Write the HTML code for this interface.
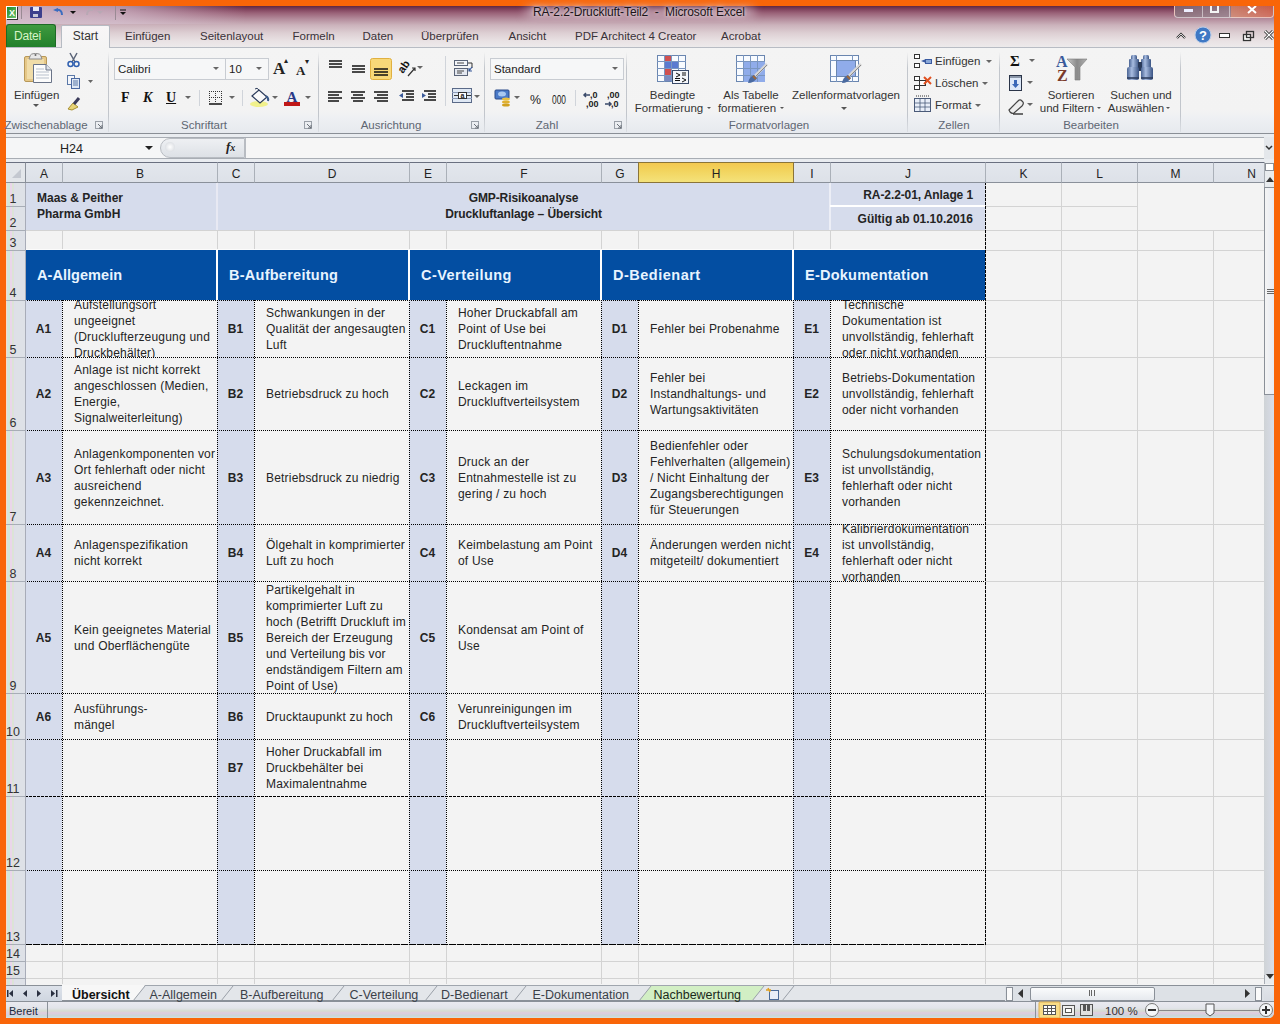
<!DOCTYPE html><html><head><meta charset="utf-8"><style>
*{box-sizing:border-box}
body{margin:0;width:1280px;height:1024px;overflow:hidden;position:relative;background:#f96508;font-family:"Liberation Sans",sans-serif}
.a{position:absolute}
.ch{position:absolute;top:162px;height:21px;font-size:12px;color:#222;text-align:center;line-height:19px;padding-top:2px;background:linear-gradient(#e3e7ed,#dde1e8);border-top:1px solid #6a7080;border-right:1px solid #aab0b8;border-bottom:1px solid #8a909a}
.rh{position:absolute;left:6px;width:20px;font-size:12.5px;color:#333;background:linear-gradient(90deg,#f6dccc 0,#f6dccc 1px,#d2e6dc 1px,#d2e6dc 4px,#eAd6ea 4px,#ead6ea 6px,#dce4d6 6px,#dce4d6 8px,#e0dcec 8px,#e0dcec 9px,#dee1e7 9px);border-bottom:1px solid #a8adb6;border-right:1px solid #a8acb8;padding-right:5px;display:flex;align-items:flex-end;justify-content:center;line-height:14px;overflow:hidden}
.c{position:absolute;display:flex;align-items:center;overflow:hidden;font-size:12px;color:#242424;line-height:16px;white-space:nowrap;letter-spacing:0.2px}
.c.b{letter-spacing:0}
.b{font-weight:bold}
.lav{background:#d6dcec}
.blu{background:#0b4d9e}
</style></head><body>
<div class="a" style="left:6px;top:6px;width:1268px;height:1012px;background:#f3f3f3;border-radius:0 0 6px 0"></div>
<div class="a" style="left:6px;top:6px;width:1268px;height:41px;background:linear-gradient(#62283f 0px,#7e405a 3px,#9a6278 7px,#b48c9c 13px,#cbb2bb 19px,#ddcfd3 27px,#e9e2e4 35px,#edeaeb 41px)"></div><div class="a" style="left:6px;top:6px;width:240px;height:18px;background:linear-gradient(90deg,rgba(215,195,210,.85) 0,rgba(215,195,210,.7) 110px,rgba(215,195,210,0) 240px)"></div><div class="a" style="left:6px;top:6px;width:11px;height:13px;background:linear-gradient(135deg,#1e8a2e,#6fc36f);border:1px solid #fff;box-shadow:1px 1px 0 #333"></div><div class="a" style="left:9px;top:8px;font:bold 9px 'Liberation Sans',sans-serif;color:#fff">X</div><div class="a" style="left:21px;top:6px;width:1px;height:13px;background:#9a8a94"></div><div class="a" style="left:30px;top:7px;width:12px;height:11px;background:#3c3f8c;border-radius:1px"></div><div class="a" style="left:33px;top:7px;width:6px;height:4px;background:#e8e8f4"></div><div class="a" style="left:33px;top:14px;width:5px;height:3px;background:#c8c8d8"></div><svg class="a" style="left:50px;top:6px" width="80" height="14"><path d="M3 4 L8 2 L8 6 Z" fill="#3a6cc0"/><path d="M6 4 Q12 3 12 9" stroke="#3a6cc0" stroke-width="2" fill="none"/><path d="M20 5 L26 5 L23 8 Z" fill="#111"/><path d="M37 9 Q37 3 43 4" stroke="#b8a8b4" stroke-width="2" fill="none"/><path d="M47 5 L53 5 L50 8 Z" fill="#b8a8b4"/><line x1="65.5" y1="0" x2="65.5" y2="14" stroke="#9a8a94"/><path d="M70 4 L76 4" stroke="#111"/><path d="M70 6 L76 6 L73 9 Z" fill="#111"/></svg><div class="a" style="left:524px;top:6px;width:232px;height:13px;border-radius:7px;background:rgba(215,195,205,.5);filter:blur(4px)"></div><div class="a" style="left:533px;top:5px;font-size:12px;color:#1c1418;white-space:nowrap;text-shadow:0 0 6px #e8dde2,0 0 3px #e8dde2;letter-spacing:-0.1px">RA-2.2-Druckluft-Teil2&nbsp; - &nbsp;Microsoft Excel</div><div class="a" style="left:1174px;top:6px;width:100px;height:12px;border:1px solid rgba(255,255,255,.6);border-top:none;border-radius:0 0 4px 4px;background:linear-gradient(rgba(0,0,0,0),rgba(255,255,255,.15)),linear-gradient(90deg,#80606e 0,#8e7280 56px,#c77a66 56px,#c85a48 100px)"></div><div class="a" style="left:1202px;top:6px;width:1px;height:11px;background:rgba(255,255,255,.5)"></div><div class="a" style="left:1229px;top:6px;width:1px;height:11px;background:rgba(255,255,255,.5)"></div><div class="a" style="left:1184px;top:9px;width:9px;height:3px;background:#eef"></div><div class="a" style="left:1210px;top:6px;width:9px;height:7px;border:2px solid #f4f4f4;border-top:none"></div><svg class="a" style="left:1247px;top:6px" width="12" height="8"><path d="M1 0 L9 7 M9 0 L1 7" stroke="#fff" stroke-width="2"/></svg><svg class="a" style="left:1174px;top:25px" width="100" height="22"><path d="M3 13 L7 9 L11 13" stroke="#333" stroke-width="2.2" fill="none"/><path d="M3 13 L7 9 L11 13" stroke="#fff" stroke-width="0.8" fill="none"/><circle cx="29" cy="10" r="8" fill="#3f78c4" stroke="#b8cce8" stroke-width="1"/><text x="29" y="15" font-family="Liberation Sans" font-weight="bold" font-size="13" fill="#fff" text-anchor="middle">?</text><rect x="45.5" y="8.5" width="10" height="4" fill="#fff" stroke="#333"/><rect x="69.5" y="9.5" width="7" height="6" fill="#fff" stroke="#333" stroke-width="1.3"/><rect x="72.5" y="6.5" width="7" height="6" fill="none" stroke="#333" stroke-width="1.3"/><path d="M91 6 L99 14 M99 6 L91 14" stroke="#333" stroke-width="3"/><path d="M91 6 L99 14 M99 6 L91 14" stroke="#fff" stroke-width="1.2"/></svg><div class="a" style="left:6px;top:24px;width:50px;height:23px;background:linear-gradient(#3f9a3f,#21802b);border:1px solid #1d6a25;border-bottom:none;border-radius:3px 3px 0 0;color:#d8f4c8;font-size:12px;line-height:22px;padding-left:7px;letter-spacing:-0.2px">Datei</div><div class="a" style="left:125px;top:30px;font-size:11.5px;color:#3a3238;white-space:nowrap">Einfügen</div><div class="a" style="left:200px;top:30px;font-size:11.5px;color:#3a3238;white-space:nowrap">Seitenlayout</div><div class="a" style="left:292.5px;top:30px;font-size:11.5px;color:#3a3238;white-space:nowrap">Formeln</div><div class="a" style="left:362.5px;top:30px;font-size:11.5px;color:#3a3238;white-space:nowrap">Daten</div><div class="a" style="left:421px;top:30px;font-size:11.5px;color:#3a3238;white-space:nowrap">Überprüfen</div><div class="a" style="left:508.5px;top:30px;font-size:11.5px;color:#3a3238;white-space:nowrap">Ansicht</div><div class="a" style="left:575px;top:30px;font-size:11.5px;color:#3a3238;white-space:nowrap">PDF Architect 4 Creator</div><div class="a" style="left:721px;top:30px;font-size:11.5px;color:#3a3238;white-space:nowrap">Acrobat</div><div class="a" style="left:6px;top:47px;width:1268px;height:87px;background:linear-gradient(#f4f4f4 0,#f3f3f3 62px,#eef0f3 70px,#e6e9ee 86px);border-top:1px solid #b8bcc4;border-bottom:1px solid #8a8f96"></div><div class="a" style="left:61px;top:25px;width:49px;height:23px;background:linear-gradient(#f8f6f7,#f4f4f4);border:1px solid #b6bbc3;border-bottom:none;border-radius:2px 2px 0 0;color:#333;font-size:12px;line-height:21px;text-align:center">Start</div><div class="a" style="left:108px;top:52px;width:1px;height:80px;background:linear-gradient(rgba(190,195,202,0),#c2c6cc 20%,#c2c6cc 80%,rgba(190,195,202,.3))"></div><div class="a" style="left:318px;top:52px;width:1px;height:80px;background:linear-gradient(rgba(190,195,202,0),#c2c6cc 20%,#c2c6cc 80%,rgba(190,195,202,.3))"></div><div class="a" style="left:484px;top:52px;width:1px;height:80px;background:linear-gradient(rgba(190,195,202,0),#c2c6cc 20%,#c2c6cc 80%,rgba(190,195,202,.3))"></div><div class="a" style="left:626px;top:52px;width:1px;height:80px;background:linear-gradient(rgba(190,195,202,0),#c2c6cc 20%,#c2c6cc 80%,rgba(190,195,202,.3))"></div><div class="a" style="left:907px;top:52px;width:1px;height:80px;background:linear-gradient(rgba(190,195,202,0),#c2c6cc 20%,#c2c6cc 80%,rgba(190,195,202,.3))"></div><div class="a" style="left:999px;top:52px;width:1px;height:80px;background:linear-gradient(rgba(190,195,202,0),#c2c6cc 20%,#c2c6cc 80%,rgba(190,195,202,.3))"></div><div class="a" style="left:1180px;top:52px;width:1px;height:80px;background:linear-gradient(rgba(190,195,202,0),#c2c6cc 20%,#c2c6cc 80%,rgba(190,195,202,.3))"></div><div class="a" style="left:-14px;top:119px;width:120px;text-align:center;font-size:11.5px;color:#5e6672;white-space:nowrap">Zwischenablage</div><div class="a" style="left:144px;top:119px;width:120px;text-align:center;font-size:11.5px;color:#5e6672;white-space:nowrap">Schriftart</div><div class="a" style="left:331px;top:119px;width:120px;text-align:center;font-size:11.5px;color:#5e6672;white-space:nowrap">Ausrichtung</div><div class="a" style="left:487px;top:119px;width:120px;text-align:center;font-size:11.5px;color:#5e6672;white-space:nowrap">Zahl</div><div class="a" style="left:709px;top:119px;width:120px;text-align:center;font-size:11.5px;color:#5e6672;white-space:nowrap">Formatvorlagen</div><div class="a" style="left:894px;top:119px;width:120px;text-align:center;font-size:11.5px;color:#5e6672;white-space:nowrap">Zellen</div><div class="a" style="left:1031px;top:119px;width:120px;text-align:center;font-size:11.5px;color:#5e6672;white-space:nowrap">Bearbeiten</div><svg class="a" style="left:95px;top:121px" width="9" height="9"><rect x="0.5" y="0.5" width="7" height="7" fill="none" stroke="#9aa0a8"/><path d="M3 3 L7 7 M7 4 L7 7 L4 7" stroke="#6a7078" fill="none"/></svg><svg class="a" style="left:304px;top:121px" width="9" height="9"><rect x="0.5" y="0.5" width="7" height="7" fill="none" stroke="#9aa0a8"/><path d="M3 3 L7 7 M7 4 L7 7 L4 7" stroke="#6a7078" fill="none"/></svg><svg class="a" style="left:471px;top:121px" width="9" height="9"><rect x="0.5" y="0.5" width="7" height="7" fill="none" stroke="#9aa0a8"/><path d="M3 3 L7 7 M7 4 L7 7 L4 7" stroke="#6a7078" fill="none"/></svg><svg class="a" style="left:614px;top:121px" width="9" height="9"><rect x="0.5" y="0.5" width="7" height="7" fill="none" stroke="#9aa0a8"/><path d="M3 3 L7 7 M7 4 L7 7 L4 7" stroke="#6a7078" fill="none"/></svg><svg class="a" style="left:22px;top:52px" width="32" height="34"><rect x="2.5" y="4.5" width="22" height="25" rx="1.5" fill="#e6c888" stroke="#b89858"/><rect x="5" y="7" width="17" height="20" fill="#f0dca8"/><path d="M8 4.5 Q8 1.5 13.5 1.5 Q19 1.5 19 4.5 L20 7 H7 Z" fill="#e8e8e8" stroke="#8a8a8a"/><circle cx="13.5" cy="3" r="1" fill="#666"/><path d="M11.5 12.5 H24 L29.5 18 V30.5 H11.5 Z" fill="#fcfcfc" stroke="#6a7488"/><path d="M24 12.5 V18 H29.5" fill="#e0e4ea" stroke="#6a7488"/><path d="M14 17 H22 M14 20 H27 M14 23 H27 M14 26 H27" stroke="#b8c0cc"/></svg><div class="a" style="left:14px;top:89px;font-size:11.5px;color:#333">Einfügen</div><svg class="a" style="left:33px;top:104px" width="8" height="5"><path d="M0 0 L6 0 L3 3 Z" fill="#555"/></svg><svg class="a" style="left:66px;top:52px" width="16" height="16"><path d="M4 1 L9 10 M11 1 L6 10" stroke="#5a6478" stroke-width="1.5"/><circle cx="4.5" cy="12" r="2.5" fill="none" stroke="#3060b0" stroke-width="1.5"/><circle cx="10.5" cy="12" r="2.5" fill="none" stroke="#3060b0" stroke-width="1.5"/></svg><svg class="a" style="left:66px;top:74px" width="30" height="16"><rect x="1.5" y="1.5" width="7" height="9" fill="#f4f6fa" stroke="#5a78a8"/><rect x="5.5" y="4.5" width="8" height="10" fill="#dfe8f4" stroke="#4a68a0"/><path d="M7 7 H12 M7 9 H12 M7 11 H12" stroke="#5a78a8"/><path d="M22 6 L27 6 L24.5 9 Z" fill="#666"/></svg><svg class="a" style="left:66px;top:95px" width="16" height="16"><path d="M2 14 L7 8 L12 12 L6 15 Z" fill="#e8d478" stroke="#a89030"/><path d="M8 9 L13 3" stroke="#3a3a5a" stroke-width="3"/></svg><div class="a" style="left:114px;top:58px;width:112px;height:22px;background:#f6f7f8;border:1px solid #c8ccd2;font-size:11.5px;line-height:20px;padding-left:3px;color:#222">Calibri</div><div class="a" style="left:225px;top:58px;width:44px;height:22px;background:#f6f7f8;border:1px solid #c8ccd2;font-size:11.5px;line-height:20px;padding-left:3px;color:#222">10</div><svg class="a" style="left:213px;top:66px" width="70" height="8"><path d="M0 1 L6 1 L3 4 Z" fill="#666"/><path d="M43 1 L49 1 L46 4 Z" fill="#666"/></svg><div class="a" style="left:273px;top:59px;font:bold 17px 'Liberation Serif',serif;color:#222">A</div><div class="a" style="left:284px;top:56px;font-size:8px;color:#222">▴</div><div class="a" style="left:296px;top:63px;font:bold 13px 'Liberation Serif',serif;color:#222">A</div><div class="a" style="left:305px;top:57px;font-size:8px;color:#222">▾</div><div class="a" style="left:121px;top:90px;font:bold 14px 'Liberation Serif',serif;color:#111">F</div><div class="a" style="left:143px;top:90px;font:bold italic 14px 'Liberation Serif',serif;color:#111">K</div><div class="a" style="left:166px;top:90px;font:bold 14px 'Liberation Serif',serif;color:#111;text-decoration:underline">U</div><svg class="a" style="left:180px;top:86px" width="140" height="24"><path d="M5 10 L11 10 L8 13 Z" fill="#666"/><line x1="19.5" y1="4" x2="19.5" y2="20" stroke="#d0d4da"/><path d="M29.5 5 V17 M35.5 5 V17 M41.5 5 V17 M29 5.5 H42 M29 11.5 H42" stroke="#333" stroke-dasharray="1 1"/><line x1="29" y1="18" x2="42" y2="18" stroke="#111" stroke-width="1.5"/><path d="M49 10 L55 10 L52 13 Z" fill="#666"/><line x1="62.5" y1="4" x2="62.5" y2="20" stroke="#d0d4da"/><ellipse cx="79" cy="18" rx="9" ry="3" fill="#f0f060" opacity=".7"/><path d="M72 10 L79 4 L87 11 L80 17 Z" fill="#fafafa" stroke="#2a3a5a" stroke-width="1.2"/><path d="M79 4 Q77 1 75 3" stroke="#2a3a5a" fill="none"/><path d="M86 10 Q89 12 88 15" stroke="#3a5a8a" stroke-width="2" fill="none"/><path d="M92 10 L98 10 L95 13 Z" fill="#666"/><text x="112" y="16" font-family="Liberation Serif" font-weight="bold" font-size="15" fill="#2a3a88" text-anchor="middle">A</text><rect x="104" y="16" width="16" height="4" fill="#c01818"/><path d="M125 10 L131 10 L128 13 Z" fill="#666"/></svg><svg class="a" style="left:322px;top:56px" width="160" height="52"><path d="M7 5 H20 M7 8 H20 M7 11 H20" stroke="#111" stroke-width="1.5"/><path d="M30 10 H43 M30 13 H43 M30 16 H43" stroke="#111" stroke-width="1.5"/><rect x="48.5" y="2.5" width="21" height="21" rx="2" fill="#f8d878" stroke="#e0b040"/><path d="M52 13 H66 M52 16 H66 M52 19 H66" stroke="#111" stroke-width="1.5"/><text x="0" y="0" font-family="Liberation Sans" font-weight="bold" font-size="11" fill="#111" transform="translate(81 18) rotate(-55)">ab</text><path d="M86 20 L93 12 M90 12 H93 V15" stroke="#333" stroke-width="1.2" fill="none"/><path d="M95 10 L101 10 L98 13 Z" fill="#666"/><line x1="123.5" y1="0" x2="123.5" y2="50" stroke="#d0d4da"/><rect x="132.5" y="4.5" width="13" height="5" fill="#f4f6fa" stroke="#5a6478"/><rect x="132.5" y="12.5" width="13" height="7" fill="#e4e8f0" stroke="#5a6478"/><path d="M135 7 H142 M135 15 H142 M135 17 H140" stroke="#444"/><path d="M146 7 H150 V12" stroke="#333" fill="none"/><path d="M150 11 L147 15 M147 12 V15 H150" stroke="#3a5a9a" stroke-width="1.2" fill="none"/><path d="M6 36 H20 M6 39 H17 M6 42 H20 M6 45 H17" stroke="#111" stroke-width="1.6"/><path d="M29 36 H43 M31 39 H41 M29 42 H43 M31 45 H41" stroke="#111" stroke-width="1.6"/><path d="M52 36 H66 M55 39 H66 M52 42 H66 M55 45 H66" stroke="#111" stroke-width="1.6"/><path d="M80 35 H92 M84 38 H92 M84 41 H92 M80 44 H92" stroke="#111" stroke-width="1.5"/><path d="M77 39.5 L81 37 L81 42 Z" fill="#3a5a9a"/><path d="M102 35 H114 M106 38 H114 M106 41 H114 M102 44 H114" stroke="#111" stroke-width="1.5"/><path d="M104 39.5 L100 37 L100 42 Z" fill="#3a5a9a"/><rect x="130.5" y="32.5" width="19" height="14" fill="#dfe8f4" stroke="#5a6a88"/><path d="M130 36.5 H150 M130 42.5 H150" stroke="#8a9ab8"/><rect x="136.5" y="36.5" width="8" height="6" fill="#fff" stroke="#333"/><text x="140.5" y="42" font-family="Liberation Sans" font-size="7" font-weight="bold" fill="#222" text-anchor="middle">a</text><path d="M132 39.5 H136 M145 39.5 H149" stroke="#333"/><path d="M152 39 L158 39 L155 42 Z" fill="#666"/></svg><div class="a" style="left:490px;top:58px;width:134px;height:22px;background:#f6f7f8;border:1px solid #c8ccd2;font-size:11.5px;line-height:20px;padding-left:3px;color:#222">Standard</div><svg class="a" style="left:612px;top:66px" width="8" height="6"><path d="M0 1 L6 1 L3 4 Z" fill="#666"/></svg><svg class="a" style="left:492px;top:86px" width="134" height="24"><rect x="3" y="4" width="14" height="9" rx="1" fill="#4a7ac8" stroke="#2a4a88"/><ellipse cx="10" cy="8" rx="4" ry="2.5" fill="#a8c8f0"/><ellipse cx="14" cy="16" rx="4" ry="1.5" fill="#e0b030"/><ellipse cx="14" cy="13" rx="4" ry="1.5" fill="#e8c040"/><ellipse cx="14" cy="19" rx="4" ry="1.5" fill="#d0a020"/><path d="M22 10 L28 10 L25 13 Z" fill="#666"/><text x="38" y="18" font-family="Liberation Sans" font-size="13" fill="#222" textLength="11" lengthAdjust="spacingAndGlyphs">%</text><text x="60" y="18" font-family="Liberation Sans" font-size="12" fill="#222" textLength="14" lengthAdjust="spacingAndGlyphs">000</text><line x1="83.5" y1="4" x2="83.5" y2="20" stroke="#d0d4da"/><path d="M92 9 H98 M94 7 L92 9 L94 11" stroke="#3a4a6a" stroke-width="1.5" fill="none"/><text x="98" y="12" font-family="Liberation Sans" font-weight="bold" font-size="9" fill="#222">,0</text><text x="94" y="21" font-family="Liberation Sans" font-weight="bold" font-size="9" fill="#222">,00</text><text x="115" y="12" font-family="Liberation Sans" font-weight="bold" font-size="9" fill="#222">,00</text><path d="M113 18 H119 M117 16 L119 18 L117 20" stroke="#3a4a6a" stroke-width="1.5" fill="none"/><text x="119" y="21" font-family="Liberation Sans" font-weight="bold" font-size="9" fill="#222">,0</text></svg><svg class="a" style="left:657px;top:55px" width="34" height="30"><rect x="0.5" y="0.5" width="28" height="26" fill="#f8fbff" stroke="#6a86b0"/><rect x="8" y="1" width="6" height="5" fill="#d05050"/><rect x="8" y="7" width="13" height="6" fill="#5a7ad0"/><rect x="8" y="14" width="6" height="6" fill="#d05050"/><rect x="8" y="21" width="6" height="5" fill="#7a8ac0"/><path d="M7.5 0 V27 M14.5 0 V27 M21.5 0 V27 M0 6.5 H29 M0 13.5 H29 M0 20.5 H29" stroke="#7a96c0"/><rect x="15.5" y="15.5" width="16" height="13" fill="#f4f6fa" stroke="#3a4a68"/><path d="M19 18 L23 20 L19 22 M18 23.5 H23 M18 25.5 H23 M25 18 H29 M25 20 H29 M25 23 L29 25 L25 27" stroke="#111" fill="none" stroke-width="1"/></svg><svg class="a" style="left:736px;top:55px" width="34" height="30"><rect x="0.5" y="0.5" width="28" height="26" fill="#f8fbff" stroke="#6a86b0"/><rect x="8" y="7" width="21" height="20" fill="#90acea"/><path d="M7.5 0 V27 M14.5 0 V27 M21.5 0 V27 M0 6.5 H29 M0 13.5 H29 M0 20.5 H29" stroke="#7a96c0"/><path d="M19 21 L31 9" stroke="#d8d8d8" stroke-width="3"/><path d="M20 21 L31 10" stroke="#8a8a8a" stroke-width="1"/><path d="M12 28 Q13 22 18 20 L21 23 Q18 28 12 28 Z" fill="#4a6aa0"/><path d="M17 21 L20 24" stroke="#a06a3a" stroke-width="2"/></svg><svg class="a" style="left:830px;top:55px" width="34" height="30"><rect x="0.5" y="0.5" width="28" height="26" fill="#f8fbff" stroke="#6a86b0"/><path d="M6.5 0 V27 M22.5 0 V27 M0 5.5 H29 M0 21.5 H29" stroke="#7a96c0"/><rect x="6.5" y="5.5" width="19" height="16" fill="#90acea" stroke="#6a86b0"/><path d="M19 21 L31 9" stroke="#d8d8d8" stroke-width="3"/><path d="M20 21 L31 10" stroke="#8a8a8a" stroke-width="1"/><path d="M12 28 Q13 22 18 20 L21 23 Q18 28 12 28 Z" fill="#4a6aa0"/><path d="M17 21 L20 24" stroke="#a06a3a" stroke-width="2"/></svg><div class="a" style="left:612.5px;top:89px;width:120px;text-align:center;font-size:11.5px;color:#333;white-space:nowrap">Bedingte</div><div class="a" style="left:609px;top:102px;width:120px;text-align:center;font-size:11.5px;color:#333;white-space:nowrap">Formatierung</div><div class="a" style="left:691px;top:89px;width:120px;text-align:center;font-size:11.5px;color:#333;white-space:nowrap">Als Tabelle</div><div class="a" style="left:687px;top:102px;width:120px;text-align:center;font-size:11.5px;color:#333;white-space:nowrap">formatieren</div><div class="a" style="left:786px;top:89px;width:120px;text-align:center;font-size:11.5px;color:#333;white-space:nowrap">Zellenformatvorlagen</div><svg class="a" style="left:700px;top:105px" width="160" height="10"><path d="M7 2 L11 2 L9 4 Z" fill="#555"/><path d="M80 2 L84 2 L82 4 Z" fill="#555"/><path d="M141 2 L147 2 L144 5 Z" fill="#555"/></svg><svg class="a" style="left:912px;top:53px" width="90" height="62"><rect x="2.5" y="1.5" width="5" height="4" fill="#fff" stroke="#333"/><rect x="2.5" y="10.5" width="5" height="4" fill="#fff" stroke="#333"/><path d="M9 8 L14 6 V10 Z" fill="#3a5aa0"/><rect x="13.5" y="6.5" width="6" height="4" fill="#8aa8d8" stroke="#3a5aa0"/><rect x="2.5" y="23.5" width="5" height="4" fill="#fff" stroke="#333"/><rect x="2.5" y="32.5" width="5" height="4" fill="#fff" stroke="#333"/><rect x="7.5" y="27.5" width="6" height="5" fill="#fff" stroke="#333"/><path d="M12 24 L19 31 M19 24 L12 31" stroke="#e05020" stroke-width="2"/><rect x="2.5" y="45.5" width="16" height="13" fill="#e8eef8" stroke="#4a5a78"/><path d="M2 50 H19 M2 54 H19 M8 45 V59 M13 45 V59" stroke="#4a5a78" stroke-width=".8"/><path d="M4 43 H17" stroke="#333" stroke-dasharray="1 1"/><path d="M74 7 L80 7 L77 10 Z" fill="#666"/><path d="M70 29 L76 29 L73 32 Z" fill="#666"/><path d="M63 51 L69 51 L66 54 Z" fill="#666"/></svg><div class="a" style="left:935px;top:55px;font-size:11.5px;color:#333;white-space:nowrap">Einfügen</div><div class="a" style="left:935px;top:77px;font-size:11.5px;color:#333;white-space:nowrap">Löschen</div><div class="a" style="left:935px;top:99px;font-size:11.5px;color:#333;white-space:nowrap">Format</div><div class="a" style="left:1010px;top:53px;font:bold 15px 'Liberation Serif',serif;color:#111">Σ</div><svg class="a" style="left:1007px;top:53px" width="30" height="64"><path d="M22 6 L28 6 L25 9 Z" fill="#666"/><rect x="2.5" y="22.5" width="12" height="15" fill="#dde8f8" stroke="#2a3448"/><rect x="3" y="23" width="11" height="2" fill="#8a96a8"/><path d="M7 27 H10 V31 H12 L8.5 35 L5 31 H7 Z" fill="#3a68b8"/><path d="M20 28 L26 28 L23 31 Z" fill="#666"/><path d="M2 57 L11 48 Q13 46 15 48 L16 49 Q17 51 15 53 L7 60 Q5 61 3 59 Z" fill="#ececec" stroke="#444" stroke-width="1.2"/><path d="M6 61 H16" stroke="#222" stroke-width="1.3"/><path d="M20 50 L26 50 L23 53 Z" fill="#666"/></svg><svg class="a" style="left:1055px;top:52px" width="34" height="32"><defs><linearGradient id="fg" x1="0" x2="1"><stop offset="0" stop-color="#c8c8c8"/><stop offset=".5" stop-color="#8a8a8a"/><stop offset="1" stop-color="#b0b0b0"/></linearGradient><linearGradient id="bg" x1="0" x2="1"><stop offset="0" stop-color="#4a6494"/><stop offset=".4" stop-color="#a8bce0"/><stop offset="1" stop-color="#3a5484"/></linearGradient></defs><text x="1" y="15" font-family="Liberation Serif" font-weight="bold" font-size="16" fill="#3a5a9a">A</text><text x="2" y="29" font-family="Liberation Serif" font-weight="bold" font-size="16" fill="#7a3a2a">Z</text><path d="M12 7 H32 L25 15 V28 H20 V15 Z" fill="url(#fg)" stroke="#7a7a7a" stroke-width=".6"/></svg><svg class="a" style="left:1126px;top:54px" width="30" height="28"><rect x="5" y="1" width="6" height="5" rx="1.5" fill="url(#bg)"/><rect x="17" y="1" width="6" height="5" rx="1.5" fill="url(#bg)"/><rect x="3" y="5" width="10" height="9" rx="1" fill="url(#bg)"/><rect x="15" y="5" width="10" height="9" rx="1" fill="url(#bg)"/><rect x="12" y="8" width="4" height="9" fill="#2a3a5a"/><rect x="1" y="13" width="12" height="13" rx="2" fill="url(#bg)"/><rect x="15" y="13" width="12" height="13" rx="2" fill="url(#bg)"/><path d="M1 24 H13 M15 24 H27" stroke="#2a3a5a" stroke-width="1.5"/></svg><div class="a" style="left:1011px;top:89px;width:120px;text-align:center;font-size:11.5px;color:#333;white-space:nowrap">Sortieren</div><div class="a" style="left:1007px;top:102px;width:120px;text-align:center;font-size:11.5px;color:#333;white-space:nowrap">und Filtern</div><div class="a" style="left:1081px;top:89px;width:120px;text-align:center;font-size:11.5px;color:#333;white-space:nowrap">Suchen und</div><div class="a" style="left:1076px;top:102px;width:120px;text-align:center;font-size:11.5px;color:#333;white-space:nowrap">Auswählen</div><svg class="a" style="left:1090px;top:105px" width="90" height="8"><path d="M7 2 L11 2 L9 4 Z" fill="#555"/><path d="M76 2 L80 2 L78 4 Z" fill="#555"/></svg><div class="a" style="left:6px;top:134px;width:1268px;height:28px;background:#e9ecf0"></div><div class="a" style="left:6px;top:137px;width:1258px;height:22px;background:#f5f6f7;border-top:1px solid #a8adb4;border-bottom:1px solid #a8adb4"></div><div class="a" style="left:60px;top:142px;font-size:12.5px;color:#222">H24</div><svg class="a" style="left:145px;top:145px" width="10" height="6"><path d="M0 1 L8 1 L4 5 Z" fill="#222"/></svg><div class="a" style="left:160px;top:138px;width:85px;height:20px;background:linear-gradient(#eef0f3,#dde1e6);border:1px solid #b8bcc2;border-radius:10px 0 0 10px"></div><div class="a" style="left:165px;top:142px;width:10px;height:10px;border-radius:50%;background:radial-gradient(#fff,#d0d4da)"></div><div class="a" style="left:226px;top:139px;font:italic bold 13px 'Liberation Serif',serif;color:#222">f<span style="font-size:10px">x</span></div><div class="a" style="left:245px;top:138px;width:1019px;height:20px;background:#f6f6f6;border-left:1px solid #b8bcc2"></div><svg class="a" style="left:1264px;top:137px" width="10" height="22"><rect x="0" y="0" width="10" height="22" fill="#e4e7eb"/><path d="M2 9 L5 12 L8 9" stroke="#333" stroke-width="1.5" fill="none"/></svg>
<div class="a" style="left:25px;top:182px;width:1239px;height:802px;background:#f3f3f3"></div>
<svg class="a" style="left:0;top:0" width="1280" height="1024"><line x1="62.5" y1="182" x2="62.5" y2="984" stroke="#d3d3d3"/><line x1="217.5" y1="182" x2="217.5" y2="984" stroke="#d3d3d3"/><line x1="254.5" y1="182" x2="254.5" y2="984" stroke="#d3d3d3"/><line x1="409.5" y1="182" x2="409.5" y2="984" stroke="#d3d3d3"/><line x1="446.5" y1="182" x2="446.5" y2="984" stroke="#d3d3d3"/><line x1="601.5" y1="182" x2="601.5" y2="984" stroke="#d3d3d3"/><line x1="638.5" y1="182" x2="638.5" y2="984" stroke="#d3d3d3"/><line x1="793.5" y1="182" x2="793.5" y2="984" stroke="#d3d3d3"/><line x1="830.5" y1="182" x2="830.5" y2="984" stroke="#d3d3d3"/><line x1="985.5" y1="182" x2="985.5" y2="984" stroke="#d3d3d3"/><line x1="1061.5" y1="182" x2="1061.5" y2="984" stroke="#d3d3d3"/><line x1="1137.5" y1="182" x2="1137.5" y2="984" stroke="#d3d3d3"/><line x1="1213.5" y1="182" x2="1213.5" y2="984" stroke="#d3d3d3"/><line x1="1264.5" y1="182" x2="1264.5" y2="984" stroke="#d3d3d3"/><line x1="25" y1="206.5" x2="1264" y2="206.5" stroke="#d3d3d3"/><line x1="25" y1="230.5" x2="1264" y2="230.5" stroke="#d3d3d3"/><line x1="25" y1="250.5" x2="1264" y2="250.5" stroke="#d3d3d3"/><line x1="25" y1="300.5" x2="1264" y2="300.5" stroke="#d3d3d3"/><line x1="25" y1="357.5" x2="1264" y2="357.5" stroke="#d3d3d3"/><line x1="25" y1="430.5" x2="1264" y2="430.5" stroke="#d3d3d3"/><line x1="25" y1="524.5" x2="1264" y2="524.5" stroke="#d3d3d3"/><line x1="25" y1="581.5" x2="1264" y2="581.5" stroke="#d3d3d3"/><line x1="25" y1="693.5" x2="1264" y2="693.5" stroke="#d3d3d3"/><line x1="25" y1="739.5" x2="1264" y2="739.5" stroke="#d3d3d3"/><line x1="25" y1="796.5" x2="1264" y2="796.5" stroke="#d3d3d3"/><line x1="25" y1="870.5" x2="1264" y2="870.5" stroke="#d3d3d3"/><line x1="25" y1="944.5" x2="1264" y2="944.5" stroke="#d3d3d3"/><line x1="25" y1="961.5" x2="1264" y2="961.5" stroke="#d3d3d3"/><line x1="25" y1="978.5" x2="1264" y2="978.5" stroke="#d3d3d3"/><line x1="25" y1="995.5" x2="1264" y2="995.5" stroke="#d3d3d3"/></svg>
<div class="c b" style="left:25px;top:182px;width:192px;height:48px;background:#d6dcec;justify-content:flex-start;text-align:left;padding-left:12px;"><div style="">Maas &amp; Peither<br>Pharma GmbH</div></div>
<div class="c b" style="left:217px;top:182px;width:613px;height:48px;background:#d6dcec;justify-content:center;text-align:center;letter-spacing:-0.1px"><div style="">GMP-Risikoanalyse<br>Druckluftanlage – Übersicht</div></div>
<div class="c b" style="left:830px;top:182px;width:155px;height:24px;background:#d6dcec;justify-content:flex-end;text-align:right;padding-right:12px;letter-spacing:-0.1px"><div style="position:relative;top:1px">RA-2.2-01, Anlage 1</div></div>
<div class="c b" style="left:830px;top:206px;width:155px;height:24px;background:#d6dcec;justify-content:flex-end;text-align:right;padding-right:12px;"><div style="position:relative;top:1px">Gültig ab 01.10.2016</div></div>
<div class="c b" style="left:25px;top:250px;width:192px;height:50px;background:#034ea2;justify-content:flex-start;text-align:left;padding-left:12px;color:#e8f4ff;font-size:14.5px;letter-spacing:0.05px"><div style="">A-Allgemein</div></div>
<div class="c b" style="left:217px;top:250px;width:192px;height:50px;background:#034ea2;justify-content:flex-start;text-align:left;padding-left:12px;color:#e8f4ff;font-size:14.5px;letter-spacing:0.26px"><div style="">B-Aufbereitung</div></div>
<div class="c b" style="left:409px;top:250px;width:192px;height:50px;background:#034ea2;justify-content:flex-start;text-align:left;padding-left:12px;color:#e8f4ff;font-size:14.5px;letter-spacing:0.45px"><div style="">C-Verteilung</div></div>
<div class="c b" style="left:601px;top:250px;width:192px;height:50px;background:#034ea2;justify-content:flex-start;text-align:left;padding-left:12px;color:#e8f4ff;font-size:14.5px;letter-spacing:0.5px"><div style="">D-Bedienart</div></div>
<div class="c b" style="left:793px;top:250px;width:192px;height:50px;background:#034ea2;justify-content:flex-start;text-align:left;padding-left:12px;color:#e8f4ff;font-size:14.5px;letter-spacing:0.24px"><div style="">E-Dokumentation</div></div>
<div class="c b" style="left:25px;top:300px;width:37px;height:57px;background:#d6dcec;justify-content:center;text-align:center;"><div style="">A1</div></div>
<div class="c " style="left:62px;top:300px;width:155px;height:57px;background:#f3f3f3;justify-content:flex-start;text-align:left;padding-left:12px;"><div style="">Aufstellungsort<br>ungeeignet<br>(Drucklufterzeugung und<br>Druckbehälter)</div></div>
<div class="c b" style="left:217px;top:300px;width:37px;height:57px;background:#d6dcec;justify-content:center;text-align:center;"><div style="">B1</div></div>
<div class="c " style="left:254px;top:300px;width:155px;height:57px;background:#f3f3f3;justify-content:flex-start;text-align:left;padding-left:12px;"><div style="">Schwankungen in der<br>Qualität der angesaugten<br>Luft</div></div>
<div class="c b" style="left:409px;top:300px;width:37px;height:57px;background:#d6dcec;justify-content:center;text-align:center;"><div style="">C1</div></div>
<div class="c " style="left:446px;top:300px;width:155px;height:57px;background:#f3f3f3;justify-content:flex-start;text-align:left;padding-left:12px;"><div style="">Hoher Druckabfall am<br>Point of Use bei<br>Druckluftentnahme</div></div>
<div class="c b" style="left:601px;top:300px;width:37px;height:57px;background:#d6dcec;justify-content:center;text-align:center;"><div style="">D1</div></div>
<div class="c " style="left:638px;top:300px;width:155px;height:57px;background:#f3f3f3;justify-content:flex-start;text-align:left;padding-left:12px;"><div style="">Fehler bei Probenahme</div></div>
<div class="c b" style="left:793px;top:300px;width:37px;height:57px;background:#d6dcec;justify-content:center;text-align:center;"><div style="">E1</div></div>
<div class="c " style="left:830px;top:300px;width:155px;height:57px;background:#f3f3f3;justify-content:flex-start;text-align:left;padding-left:12px;"><div style="">Technische<br>Dokumentation ist<br>unvollständig, fehlerhaft<br>oder nicht vorhanden</div></div>
<div class="c b" style="left:25px;top:357px;width:37px;height:73px;background:#d6dcec;justify-content:center;text-align:center;"><div style="">A2</div></div>
<div class="c " style="left:62px;top:357px;width:155px;height:73px;background:#f3f3f3;justify-content:flex-start;text-align:left;padding-left:12px;"><div style="">Anlage ist nicht korrekt<br>angeschlossen (Medien,<br>Energie,<br>Signalweiterleitung)</div></div>
<div class="c b" style="left:217px;top:357px;width:37px;height:73px;background:#d6dcec;justify-content:center;text-align:center;"><div style="">B2</div></div>
<div class="c " style="left:254px;top:357px;width:155px;height:73px;background:#f3f3f3;justify-content:flex-start;text-align:left;padding-left:12px;"><div style="">Betriebsdruck zu hoch</div></div>
<div class="c b" style="left:409px;top:357px;width:37px;height:73px;background:#d6dcec;justify-content:center;text-align:center;"><div style="">C2</div></div>
<div class="c " style="left:446px;top:357px;width:155px;height:73px;background:#f3f3f3;justify-content:flex-start;text-align:left;padding-left:12px;"><div style="">Leckagen im<br>Druckluftverteilsystem</div></div>
<div class="c b" style="left:601px;top:357px;width:37px;height:73px;background:#d6dcec;justify-content:center;text-align:center;"><div style="">D2</div></div>
<div class="c " style="left:638px;top:357px;width:155px;height:73px;background:#f3f3f3;justify-content:flex-start;text-align:left;padding-left:12px;"><div style="">Fehler bei<br>Instandhaltungs- und<br>Wartungsaktivitäten</div></div>
<div class="c b" style="left:793px;top:357px;width:37px;height:73px;background:#d6dcec;justify-content:center;text-align:center;"><div style="">E2</div></div>
<div class="c " style="left:830px;top:357px;width:155px;height:73px;background:#f3f3f3;justify-content:flex-start;text-align:left;padding-left:12px;"><div style="">Betriebs-Dokumentation<br>unvollständig, fehlerhaft<br>oder nicht vorhanden</div></div>
<div class="c b" style="left:25px;top:430px;width:37px;height:94px;background:#d6dcec;justify-content:center;text-align:center;"><div style="position:relative;top:1px">A3</div></div>
<div class="c " style="left:62px;top:430px;width:155px;height:94px;background:#f3f3f3;justify-content:flex-start;text-align:left;padding-left:12px;"><div style="position:relative;top:1px">Anlagenkomponenten vor<br>Ort fehlerhaft oder nicht<br>ausreichend<br>gekennzeichnet.</div></div>
<div class="c b" style="left:217px;top:430px;width:37px;height:94px;background:#d6dcec;justify-content:center;text-align:center;"><div style="position:relative;top:1px">B3</div></div>
<div class="c " style="left:254px;top:430px;width:155px;height:94px;background:#f3f3f3;justify-content:flex-start;text-align:left;padding-left:12px;"><div style="position:relative;top:1px">Betriebsdruck zu niedrig</div></div>
<div class="c b" style="left:409px;top:430px;width:37px;height:94px;background:#d6dcec;justify-content:center;text-align:center;"><div style="position:relative;top:1px">C3</div></div>
<div class="c " style="left:446px;top:430px;width:155px;height:94px;background:#f3f3f3;justify-content:flex-start;text-align:left;padding-left:12px;"><div style="position:relative;top:1px">Druck an der<br>Entnahmestelle ist zu<br>gering / zu hoch</div></div>
<div class="c b" style="left:601px;top:430px;width:37px;height:94px;background:#d6dcec;justify-content:center;text-align:center;"><div style="position:relative;top:1px">D3</div></div>
<div class="c " style="left:638px;top:430px;width:155px;height:94px;background:#f3f3f3;justify-content:flex-start;text-align:left;padding-left:12px;"><div style="position:relative;top:1px">Bedienfehler oder<br>Fehlverhalten (allgemein)<br>/ Nicht Einhaltung der<br>Zugangsberechtigungen<br>für Steuerungen</div></div>
<div class="c b" style="left:793px;top:430px;width:37px;height:94px;background:#d6dcec;justify-content:center;text-align:center;"><div style="position:relative;top:1px">E3</div></div>
<div class="c " style="left:830px;top:430px;width:155px;height:94px;background:#f3f3f3;justify-content:flex-start;text-align:left;padding-left:12px;"><div style="position:relative;top:1px">Schulungsdokumentation<br>ist unvollständig,<br>fehlerhaft oder nicht<br>vorhanden</div></div>
<div class="c b" style="left:25px;top:524px;width:37px;height:57px;background:#d6dcec;justify-content:center;text-align:center;"><div style="">A4</div></div>
<div class="c " style="left:62px;top:524px;width:155px;height:57px;background:#f3f3f3;justify-content:flex-start;text-align:left;padding-left:12px;"><div style="">Anlagenspezifikation<br>nicht korrekt</div></div>
<div class="c b" style="left:217px;top:524px;width:37px;height:57px;background:#d6dcec;justify-content:center;text-align:center;"><div style="">B4</div></div>
<div class="c " style="left:254px;top:524px;width:155px;height:57px;background:#f3f3f3;justify-content:flex-start;text-align:left;padding-left:12px;"><div style="">Ölgehalt in komprimierter<br>Luft zu hoch</div></div>
<div class="c b" style="left:409px;top:524px;width:37px;height:57px;background:#d6dcec;justify-content:center;text-align:center;"><div style="">C4</div></div>
<div class="c " style="left:446px;top:524px;width:155px;height:57px;background:#f3f3f3;justify-content:flex-start;text-align:left;padding-left:12px;"><div style="">Keimbelastung am Point<br>of Use</div></div>
<div class="c b" style="left:601px;top:524px;width:37px;height:57px;background:#d6dcec;justify-content:center;text-align:center;"><div style="">D4</div></div>
<div class="c " style="left:638px;top:524px;width:155px;height:57px;background:#f3f3f3;justify-content:flex-start;text-align:left;padding-left:12px;"><div style="">Änderungen werden nicht<br>mitgeteilt/ dokumentiert</div></div>
<div class="c b" style="left:793px;top:524px;width:37px;height:57px;background:#d6dcec;justify-content:center;text-align:center;"><div style="">E4</div></div>
<div class="c " style="left:830px;top:524px;width:155px;height:57px;background:#f3f3f3;justify-content:flex-start;text-align:left;padding-left:12px;"><div style="">Kalibrierdokumentation<br>ist unvollständig,<br>fehlerhaft oder nicht<br>vorhanden</div></div>
<div class="c b" style="left:25px;top:581px;width:37px;height:112px;background:#d6dcec;justify-content:center;text-align:center;"><div style="position:relative;top:1px">A5</div></div>
<div class="c " style="left:62px;top:581px;width:155px;height:112px;background:#f3f3f3;justify-content:flex-start;text-align:left;padding-left:12px;"><div style="position:relative;top:1px">Kein geeignetes Material<br>und Oberflächengüte</div></div>
<div class="c b" style="left:217px;top:581px;width:37px;height:112px;background:#d6dcec;justify-content:center;text-align:center;"><div style="position:relative;top:1px">B5</div></div>
<div class="c " style="left:254px;top:581px;width:155px;height:112px;background:#f3f3f3;justify-content:flex-start;text-align:left;padding-left:12px;"><div style="position:relative;top:1px">Partikelgehalt in<br>komprimierter Luft zu<br>hoch (Betrifft Druckluft im<br>Bereich der Erzeugung<br>und Verteilung bis vor<br>endständigem Filtern am<br>Point of Use)</div></div>
<div class="c b" style="left:409px;top:581px;width:37px;height:112px;background:#d6dcec;justify-content:center;text-align:center;"><div style="position:relative;top:1px">C5</div></div>
<div class="c " style="left:446px;top:581px;width:155px;height:112px;background:#f3f3f3;justify-content:flex-start;text-align:left;padding-left:12px;"><div style="position:relative;top:1px">Kondensat am Point of<br>Use</div></div>
<div class="c b" style="left:601px;top:581px;width:37px;height:112px;background:#d6dcec;justify-content:center;text-align:center;"><div style="position:relative;top:1px"></div></div>
<div class="c " style="left:638px;top:581px;width:155px;height:112px;background:#f3f3f3;justify-content:flex-start;text-align:left;padding-left:12px;"><div style="position:relative;top:1px"></div></div>
<div class="c b" style="left:793px;top:581px;width:37px;height:112px;background:#d6dcec;justify-content:center;text-align:center;"><div style="position:relative;top:1px"></div></div>
<div class="c " style="left:830px;top:581px;width:155px;height:112px;background:#f3f3f3;justify-content:flex-start;text-align:left;padding-left:12px;"><div style="position:relative;top:1px"></div></div>
<div class="c b" style="left:25px;top:693px;width:37px;height:46px;background:#d6dcec;justify-content:center;text-align:center;"><div style="position:relative;top:1px">A6</div></div>
<div class="c " style="left:62px;top:693px;width:155px;height:46px;background:#f3f3f3;justify-content:flex-start;text-align:left;padding-left:12px;"><div style="position:relative;top:1px">Ausführungs-<br>mängel</div></div>
<div class="c b" style="left:217px;top:693px;width:37px;height:46px;background:#d6dcec;justify-content:center;text-align:center;"><div style="position:relative;top:1px">B6</div></div>
<div class="c " style="left:254px;top:693px;width:155px;height:46px;background:#f3f3f3;justify-content:flex-start;text-align:left;padding-left:12px;"><div style="position:relative;top:1px">Drucktaupunkt zu hoch</div></div>
<div class="c b" style="left:409px;top:693px;width:37px;height:46px;background:#d6dcec;justify-content:center;text-align:center;"><div style="position:relative;top:1px">C6</div></div>
<div class="c " style="left:446px;top:693px;width:155px;height:46px;background:#f3f3f3;justify-content:flex-start;text-align:left;padding-left:12px;"><div style="position:relative;top:1px">Verunreinigungen im<br>Druckluftverteilsystem</div></div>
<div class="c b" style="left:601px;top:693px;width:37px;height:46px;background:#d6dcec;justify-content:center;text-align:center;"><div style="position:relative;top:1px"></div></div>
<div class="c " style="left:638px;top:693px;width:155px;height:46px;background:#f3f3f3;justify-content:flex-start;text-align:left;padding-left:12px;"><div style="position:relative;top:1px"></div></div>
<div class="c b" style="left:793px;top:693px;width:37px;height:46px;background:#d6dcec;justify-content:center;text-align:center;"><div style="position:relative;top:1px"></div></div>
<div class="c " style="left:830px;top:693px;width:155px;height:46px;background:#f3f3f3;justify-content:flex-start;text-align:left;padding-left:12px;"><div style="position:relative;top:1px"></div></div>
<div class="c b" style="left:25px;top:739px;width:37px;height:57px;background:#d6dcec;justify-content:center;text-align:center;"><div style=""></div></div>
<div class="c " style="left:62px;top:739px;width:155px;height:57px;background:#f3f3f3;justify-content:flex-start;text-align:left;padding-left:12px;"><div style=""></div></div>
<div class="c b" style="left:217px;top:739px;width:37px;height:57px;background:#d6dcec;justify-content:center;text-align:center;"><div style="">B7</div></div>
<div class="c " style="left:254px;top:739px;width:155px;height:57px;background:#f3f3f3;justify-content:flex-start;text-align:left;padding-left:12px;"><div style="">Hoher Druckabfall im<br>Druckbehälter bei<br>Maximalentnahme</div></div>
<div class="c b" style="left:409px;top:739px;width:37px;height:57px;background:#d6dcec;justify-content:center;text-align:center;"><div style=""></div></div>
<div class="c " style="left:446px;top:739px;width:155px;height:57px;background:#f3f3f3;justify-content:flex-start;text-align:left;padding-left:12px;"><div style=""></div></div>
<div class="c b" style="left:601px;top:739px;width:37px;height:57px;background:#d6dcec;justify-content:center;text-align:center;"><div style=""></div></div>
<div class="c " style="left:638px;top:739px;width:155px;height:57px;background:#f3f3f3;justify-content:flex-start;text-align:left;padding-left:12px;"><div style=""></div></div>
<div class="c b" style="left:793px;top:739px;width:37px;height:57px;background:#d6dcec;justify-content:center;text-align:center;"><div style=""></div></div>
<div class="c " style="left:830px;top:739px;width:155px;height:57px;background:#f3f3f3;justify-content:flex-start;text-align:left;padding-left:12px;"><div style=""></div></div>
<div class="c b" style="left:25px;top:796px;width:37px;height:74px;background:#d6dcec;justify-content:center;text-align:center;"><div style=""></div></div>
<div class="c " style="left:62px;top:796px;width:155px;height:74px;background:#f3f3f3;justify-content:flex-start;text-align:left;padding-left:12px;"><div style=""></div></div>
<div class="c b" style="left:217px;top:796px;width:37px;height:74px;background:#d6dcec;justify-content:center;text-align:center;"><div style=""></div></div>
<div class="c " style="left:254px;top:796px;width:155px;height:74px;background:#f3f3f3;justify-content:flex-start;text-align:left;padding-left:12px;"><div style=""></div></div>
<div class="c b" style="left:409px;top:796px;width:37px;height:74px;background:#d6dcec;justify-content:center;text-align:center;"><div style=""></div></div>
<div class="c " style="left:446px;top:796px;width:155px;height:74px;background:#f3f3f3;justify-content:flex-start;text-align:left;padding-left:12px;"><div style=""></div></div>
<div class="c b" style="left:601px;top:796px;width:37px;height:74px;background:#d6dcec;justify-content:center;text-align:center;"><div style=""></div></div>
<div class="c " style="left:638px;top:796px;width:155px;height:74px;background:#f3f3f3;justify-content:flex-start;text-align:left;padding-left:12px;"><div style=""></div></div>
<div class="c b" style="left:793px;top:796px;width:37px;height:74px;background:#d6dcec;justify-content:center;text-align:center;"><div style=""></div></div>
<div class="c " style="left:830px;top:796px;width:155px;height:74px;background:#f3f3f3;justify-content:flex-start;text-align:left;padding-left:12px;"><div style=""></div></div>
<div class="c b" style="left:25px;top:870px;width:37px;height:74px;background:#d6dcec;justify-content:center;text-align:center;"><div style=""></div></div>
<div class="c " style="left:62px;top:870px;width:155px;height:74px;background:#f3f3f3;justify-content:flex-start;text-align:left;padding-left:12px;"><div style=""></div></div>
<div class="c b" style="left:217px;top:870px;width:37px;height:74px;background:#d6dcec;justify-content:center;text-align:center;"><div style=""></div></div>
<div class="c " style="left:254px;top:870px;width:155px;height:74px;background:#f3f3f3;justify-content:flex-start;text-align:left;padding-left:12px;"><div style=""></div></div>
<div class="c b" style="left:409px;top:870px;width:37px;height:74px;background:#d6dcec;justify-content:center;text-align:center;"><div style=""></div></div>
<div class="c " style="left:446px;top:870px;width:155px;height:74px;background:#f3f3f3;justify-content:flex-start;text-align:left;padding-left:12px;"><div style=""></div></div>
<div class="c b" style="left:601px;top:870px;width:37px;height:74px;background:#d6dcec;justify-content:center;text-align:center;"><div style=""></div></div>
<div class="c " style="left:638px;top:870px;width:155px;height:74px;background:#f3f3f3;justify-content:flex-start;text-align:left;padding-left:12px;"><div style=""></div></div>
<div class="c b" style="left:793px;top:870px;width:37px;height:74px;background:#d6dcec;justify-content:center;text-align:center;"><div style=""></div></div>
<div class="c " style="left:830px;top:870px;width:155px;height:74px;background:#f3f3f3;justify-content:flex-start;text-align:left;padding-left:12px;"><div style=""></div></div>
<div class="a" style="left:1138px;top:183px;width:126px;height:47px;background:#f3f3f3"></div>
<div class="a" style="left:216px;top:183px;width:2px;height:47px;background:#e8e9f3"></div>
<div class="a" style="left:216px;top:249px;width:2px;height:51px;background:#fff"></div>
<div class="a" style="left:25px;top:249px;width:960px;height:1px;background:#fbfbfb"></div>
<div class="a" style="left:829px;top:183px;width:2px;height:47px;background:#eceef6"></div>
<div class="a" style="left:830px;top:205px;width:155px;height:2px;background:#fff"></div>
<div class="a" style="left:408px;top:250px;width:2px;height:50px;background:#fff"></div>
<div class="a" style="left:600px;top:250px;width:2px;height:50px;background:#fff"></div>
<div class="a" style="left:792px;top:250px;width:2px;height:50px;background:#fff"></div>
<svg class="a" style="left:0;top:0" width="1280" height="1024"><line x1="25" y1="300.5" x2="985" y2="300.5" stroke="#000" stroke-dasharray="1 1"/><line x1="25" y1="357.5" x2="985" y2="357.5" stroke="#000" stroke-dasharray="1 1"/><line x1="25" y1="430.5" x2="985" y2="430.5" stroke="#000" stroke-dasharray="1 1"/><line x1="25" y1="524.5" x2="985" y2="524.5" stroke="#000" stroke-dasharray="1 1"/><line x1="25" y1="581.5" x2="985" y2="581.5" stroke="#000" stroke-dasharray="1 1"/><line x1="25" y1="693.5" x2="985" y2="693.5" stroke="#000" stroke-dasharray="1 1"/><line x1="25" y1="739.5" x2="985" y2="739.5" stroke="#000" stroke-dasharray="1 1"/><line x1="25" y1="870.5" x2="985" y2="870.5" stroke="#000" stroke-dasharray="1 1"/><line x1="25" y1="796.5" x2="986" y2="796.5" stroke="#000" stroke-dasharray="3 1"/><line x1="25" y1="944.5" x2="986" y2="944.5" stroke="#000" stroke-dasharray="7 1"/><line x1="62.5" y1="300" x2="62.5" y2="944" stroke="#000" stroke-dasharray="1 1"/><line x1="217.5" y1="300" x2="217.5" y2="944" stroke="#000" stroke-dasharray="1 1"/><line x1="254.5" y1="300" x2="254.5" y2="944" stroke="#000" stroke-dasharray="1 1"/><line x1="409.5" y1="300" x2="409.5" y2="944" stroke="#000" stroke-dasharray="1 1"/><line x1="446.5" y1="300" x2="446.5" y2="944" stroke="#000" stroke-dasharray="1 1"/><line x1="601.5" y1="300" x2="601.5" y2="944" stroke="#000" stroke-dasharray="1 1"/><line x1="638.5" y1="300" x2="638.5" y2="944" stroke="#000" stroke-dasharray="1 1"/><line x1="793.5" y1="300" x2="793.5" y2="944" stroke="#000" stroke-dasharray="1 1"/><line x1="830.5" y1="300" x2="830.5" y2="944" stroke="#000" stroke-dasharray="1 1"/><line x1="985.5" y1="182" x2="985.5" y2="945" stroke="#000" stroke-dasharray="3 1"/></svg>
<div class="a" style="left:6px;top:162px;width:20px;height:21px;background:#e3e6ea;border-top:1px solid #6a7080;border-right:1px solid #8a909a;border-bottom:1px solid #8a909a"></div>
<svg class="a" style="left:11px;top:168px" width="12" height="12"><path d="M10 1 V10 H1 Z" fill="#c4c8d0"/></svg>
<div class="ch" style="left:26px;width:37px;">A</div>
<div class="ch" style="left:63px;width:155px;">B</div>
<div class="ch" style="left:218px;width:37px;">C</div>
<div class="ch" style="left:255px;width:155px;">D</div>
<div class="ch" style="left:410px;width:37px;">E</div>
<div class="ch" style="left:447px;width:155px;">F</div>
<div class="ch" style="left:602px;width:37px;">G</div>
<div class="ch" style="left:639px;width:155px;background:linear-gradient(#f3c850,#f2d45e 40%,#f4e27a);border:1px solid #8a7438;margin-left:-1px;width:156px;">H</div>
<div class="ch" style="left:794px;width:37px;">I</div>
<div class="ch" style="left:831px;width:155px;">J</div>
<div class="ch" style="left:986px;width:76px;">K</div>
<div class="ch" style="left:1062px;width:76px;">L</div>
<div class="ch" style="left:1138px;width:76px;">M</div>
<div class="ch" style="left:1214px;width:76px;">N</div>
<div class="rh" style="top:183px;height:24px">1</div>
<div class="rh" style="top:207px;height:24px">2</div>
<div class="rh" style="top:231px;height:20px">3</div>
<div class="rh" style="top:251px;height:50px">4</div>
<div class="rh" style="top:301px;height:57px">5</div>
<div class="rh" style="top:358px;height:73px">6</div>
<div class="rh" style="top:431px;height:94px">7</div>
<div class="rh" style="top:525px;height:57px">8</div>
<div class="rh" style="top:582px;height:112px">9</div>
<div class="rh" style="top:694px;height:46px">10</div>
<div class="rh" style="top:740px;height:57px">11</div>
<div class="rh" style="top:797px;height:74px">12</div>
<div class="rh" style="top:871px;height:74px">13</div>
<div class="rh" style="top:945px;height:17px">14</div>
<div class="rh" style="top:962px;height:17px">15</div>
<div class="rh" style="top:979px;height:17px"></div>
<div class="a" style="left:1264px;top:162px;width:10px;height:822px;background:#e8ebee;border-left:1px solid #a8adb4"></div><div class="a" style="left:1265px;top:163px;width:9px;height:8px;background:#fff;border:1px solid #8a9098"></div><svg class="a" style="left:1265px;top:174px" width="9" height="10"><path d="M1 8 L5 3 L9 8 Z" fill="#333"/></svg><div class="a" style="left:1264px;top:187px;width:10px;height:208px;background:linear-gradient(90deg,#f4f4f4,#e8ecf4);border:1px solid #8a9098;border-right:none"></div><div class="a" style="left:1267px;top:289px;width:7px;height:5px;border-top:1px solid #666;border-bottom:1px solid #666"></div><div class="a" style="left:1267px;top:291px;width:7px;height:1px;background:#666"></div><div class="a" style="left:1264px;top:395px;width:10px;height:580px;background:linear-gradient(90deg,#cfd3d6,#d8dce8)"></div><svg class="a" style="left:1265px;top:972px" width="9" height="10"><path d="M1 2 L5 7 L9 2 Z" fill="#333"/></svg><div class="a" style="left:6px;top:985px;width:1268px;height:17px;background:linear-gradient(#e2e5ea,#d8dce2);border-top:1px solid #8a9098;border-bottom:1px solid #8a9098"></div><div class="a" style="left:6px;top:986px;width:56px;height:15px;background:linear-gradient(#dde2ea,#cfd6e0)"></div><svg class="a" style="left:6px;top:986px" width="56" height="15"><rect x="1" y="4" width="1.5" height="7" fill="#2a3040"/><path d="M7 4 L3 7.5 L7 11 Z" fill="#2a3040"/><path d="M21 4 L17 7.5 L21 11 Z" fill="#2a3040"/><path d="M31 4 L35 7.5 L31 11 Z" fill="#2a3040"/><path d="M45 4 L49 7.5 L45 11 Z" fill="#2a3040"/><rect x="50" y="4" width="1.5" height="7" fill="#2a3040"/></svg><svg class="a" style="left:62px;top:985px" width="945" height="17"><rect x="0" y="1" width="945" height="15" fill="#e3e6ea"/><line x1="0" y1="0.5" x2="945" y2="0.5" stroke="#a0a6ae"/><path d="M577 16 L589 1 H702 L690 16 Z" fill="#d2efc4"/><path d="M0 0 H83 L71 16 H0 Z" fill="#f7f7f7"/><path d="M71 16 L83 1" stroke="#9aa0a8"/><path d="M159 16 L171 1" stroke="#9aa0a8"/><path d="M270 16 L282 1" stroke="#9aa0a8"/><path d="M363 16 L375 1" stroke="#9aa0a8"/><path d="M452 16 L464 1" stroke="#9aa0a8"/><path d="M577 16 L589 1" stroke="#9aa0a8"/><path d="M690 16 L702 1" stroke="#9aa0a8"/><path d="M720 16 L732 1" stroke="#9aa0a8"/><line x1="0" y1="15.5" x2="945" y2="15.5" stroke="#8a9098"/></svg><div class="a" style="left:72px;top:988px;font:bold 12.5px 'Liberation Sans',sans-serif;color:#111;white-space:nowrap">Übersicht</div><div class="a" style="left:149.5px;top:988px;font-size:12.5px;color:#3a4048;white-space:nowrap">A-Allgemein</div><div class="a" style="left:240px;top:988px;font-size:12.5px;color:#3a4048;white-space:nowrap">B-Aufbereitung</div><div class="a" style="left:349.5px;top:988px;font-size:12.5px;color:#3a4048;white-space:nowrap">C-Verteilung</div><div class="a" style="left:441px;top:988px;font-size:12.5px;color:#3a4048;white-space:nowrap">D-Bedienart</div><div class="a" style="left:532.5px;top:988px;font-size:12.5px;color:#3a4048;white-space:nowrap">E-Dokumentation</div><div class="a" style="left:653.5px;top:988px;font-size:12.5px;color:#1a2a1a;white-space:nowrap">Nachbewertung</div><svg class="a" style="left:765px;top:987px" width="16" height="14"><rect x="4.5" y="3.5" width="9" height="9" fill="#e8eef8" stroke="#4a6a98"/><path d="M3 1 L5 5 M1 3 L6 3" stroke="#e0a020" stroke-width="1.5"/></svg><div class="a" style="left:1005px;top:986px;width:259px;height:15px;background:#dde1e6"></div><div class="a" style="left:1006px;top:987px;width:7px;height:14px;background:#fafafa;border:1px solid #8a9098"></div><svg class="a" style="left:1016px;top:987px" width="10" height="13"><path d="M7 2 L2 6.5 L7 11 Z" fill="#333"/></svg><div class="a" style="left:1030px;top:987px;width:125px;height:14px;background:linear-gradient(#fafbfc,#e6e9ee);border:1px solid #8a9098;border-radius:2px"></div><div class="a" style="left:1089px;top:990px;width:6px;height:6px;border-left:1px solid #666;border-right:1px solid #666"></div><div class="a" style="left:1091px;top:990px;width:2px;height:6px;border-left:1px solid #666"></div><svg class="a" style="left:1242px;top:987px" width="10" height="13"><path d="M3 2 L8 6.5 L3 11 Z" fill="#333"/></svg><div class="a" style="left:1255px;top:987px;width:7px;height:14px;background:#fafafa;border:1px solid #8a9098"></div><div class="a" style="left:6px;top:1002px;width:1268px;height:16px;background:linear-gradient(#eaeaf0 0,#e2e4ea 6px,#d6dcd2 9px,#e0cce0 11px,#c8d8d8 14px,#d8e0e0 16px);border-radius:0 0 5px 0"></div><div class="a" style="left:9px;top:1005px;font-size:11px;color:#1a2a40">Bereit</div><div class="a" style="left:47px;top:1002px;width:1px;height:16px;background:#8a9098"></div><div class="a" style="left:1035px;top:1002px;width:1px;height:16px;background:#8a9098"></div><svg class="a" style="left:1038px;top:1001px" width="236" height="17"><rect x="1" y="1" width="21" height="16" rx="1" fill="#f8dc88" stroke="#e0b050"/><rect x="5.5" y="4.5" width="12" height="9" fill="#fff" stroke="#555"/><path d="M5 7.5 H18 M5 10.5 H18 M9.5 4 V14 M13.5 4 V14" stroke="#555"/><rect x="24.5" y="4.5" width="12" height="10" fill="#f0f0f0" stroke="#555"/><rect x="27.5" y="7.5" width="6" height="4" fill="#fff" stroke="#555"/><rect x="42.5" y="3.5" width="12" height="11" fill="#e0e0e0" stroke="#555"/><rect x="45" y="3" width="3" height="7" fill="#555"/><rect x="49" y="3" width="3" height="7" fill="#555"/><text x="67" y="14" font-family="Liberation Sans" font-size="11.5" fill="#333">100 %</text><circle cx="114" cy="9" r="6.5" fill="#f4f6f8" stroke="#777"/><path d="M110 9 H118" stroke="#333" stroke-width="2"/><line x1="121" y1="9.5" x2="222" y2="9.5" stroke="#888"/><path d="M168 3 H176 V12 L172 15 L168 12 Z" fill="#f4f6fa" stroke="#555"/><circle cx="228" cy="9" r="6.5" fill="#f4f6f8" stroke="#777"/><path d="M224 9 H232 M228 5 V13" stroke="#333" stroke-width="2"/></svg>
<div class="a" style="left:1274px;top:0;width:6px;height:1024px;background:#f96508"></div>
</body></html>
